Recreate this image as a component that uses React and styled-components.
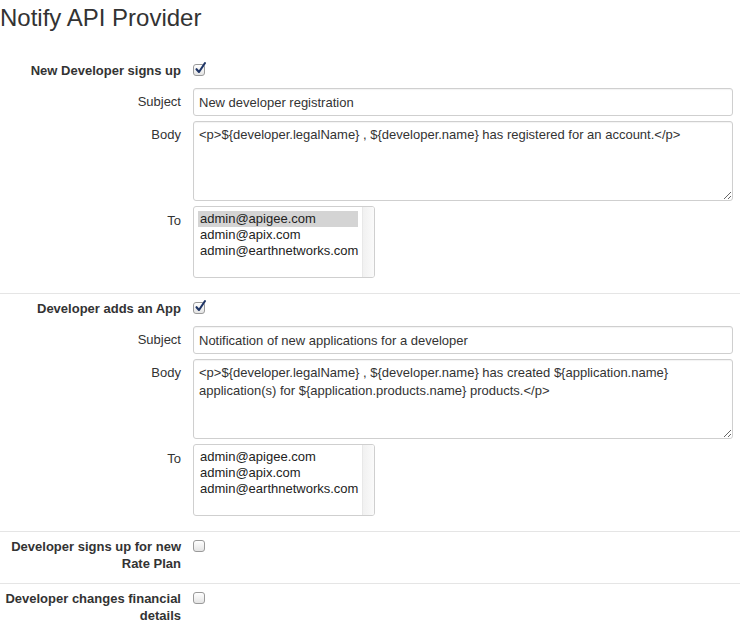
import React from 'react';
import styled, { createGlobalStyle } from 'styled-components';

const GlobalStyle = createGlobalStyle`
  body {
    margin: 0;
    background: #fff;
    font-family: "Liberation Sans", Arial, sans-serif;
    font-size: 13px;
    color: #333;
  }
`;

const Page = styled.div`
  width: 740px;
  height: 630px;
  overflow: hidden;
`;

const Title = styled.h1`
  margin: 0;
  height: 55px;
  padding-top: 4px;
  box-sizing: border-box;
  font-size: 24px;
  font-weight: 300;
  line-height: 28px;
  color: #333;
`;

const Section = styled.section`
  border-top: ${p => (p.first ? 'none' : '1px solid #e5e5e5')};
  padding: ${p => p.pad || '5px 0 15px'};
  display: flex;
  flex-direction: column;
`;

const Row = styled.div`
  display: grid;
  grid-template-columns: 181px 540px;
  column-gap: 12px;
  align-items: start;
  margin-top: ${p => p.gap || 0}px;
`;

const EventLabel = styled.label`
  text-align: right;
  font-weight: bold;
  line-height: 17px;
  padding-top: ${p => p.top ?? 2}px;
  color: #333;
`;

const FieldLabel = styled.label`
  text-align: right;
  line-height: 18px;
  padding-top: ${p => p.top || 5}px;
  color: #333;
`;

const CheckHolder = styled.div`
  height: ${p => p.h || 20}px;
  display: flex;
  align-items: ${p => (p.h ? 'flex-start' : 'center')};
`;

const CheckBox = styled.span`
  width: 12px;
  height: 12px;
  box-sizing: border-box;
  border: 1px solid #9a9a9a;
  border-radius: 3px;
  background: linear-gradient(#ffffff, #e4e4e4);
  position: relative;
  display: inline-block;
  margin-top: ${p => p.top || 0}px;

  svg {
    position: absolute;
    left: 0px;
    top: -4px;
  }
`;

const TextInput = styled.input`
  box-sizing: border-box;
  width: 540px;
  height: 28px;
  border: 1px solid #cfcfcf;
  border-radius: 3px;
  padding: 0 5px;
  font-family: inherit;
  font-size: 13px;
  color: #333;
  box-shadow: inset 0 1px 1px rgba(0, 0, 0, 0.05);
  outline: none;
`;

const TextArea = styled.textarea`
  box-sizing: border-box;
  width: 540px;
  height: 80px;
  border: 1px solid #cfcfcf;
  border-radius: 3px;
  padding: 4px 5px;
  font-family: inherit;
  font-size: 13px;
  line-height: 18px;
  color: #333;
  box-shadow: inset 0 1px 1px rgba(0, 0, 0, 0.05);
  outline: none;
  display: block;
`;

const ListBox = styled.div`
  box-sizing: border-box;
  width: 182px;
  height: 72px;
  border: 1px solid #cfcfcf;
  border-radius: 3px;
  display: flex;
  overflow: hidden;
`;

const Options = styled.div`
  flex: 1;
  padding: 4px 4px 0 4px;
`;

const Option = styled.div`
  line-height: 16px;
  height: 16px;
  padding-left: 2px;
  color: #222;
  background: ${p => (p.selected ? '#d4d4d4' : 'transparent')};
`;

const Track = styled.div`
  width: 11px;
  border-left: 1px solid #e8e8e8;
  background: linear-gradient(90deg, #f1f1f1, #fafafa);
`;

const Check = () => (
  <svg width="13" height="14" viewBox="0 0 13 14">
    <path
      d="M2.5 8.2 L5 11 L11 2"
      fill="none"
      stroke="#1f3566"
      strokeWidth="2.1"
      strokeLinecap="round"
      strokeLinejoin="round"
    />
  </svg>
);

const emails = ['admin@apigee.com', 'admin@apix.com', 'admin@earthnetworks.com'];

const NotifyBlock = ({ first, label, subject, body, selected, bodyGap }) => (
  <Section first={first} pad={first ? '5px 0 15px' : '4px 0 15px'}>
    <Row>
      <EventLabel>{label}</EventLabel>
      <CheckHolder>
        <CheckBox>
          <Check />
        </CheckBox>
      </CheckHolder>
    </Row>
    <Row gap={8}>
      <FieldLabel>Subject</FieldLabel>
      <TextInput readOnly defaultValue={subject} />
    </Row>
    <Row gap={bodyGap}>
      <FieldLabel>Body</FieldLabel>
      <TextArea readOnly defaultValue={body} />
    </Row>
    <Row gap={5}>
      <FieldLabel top={6}>To</FieldLabel>
      <ListBox>
        <Options>
          {emails.map((e, i) => (
            <Option key={e} selected={selected && i === 0}>{e}</Option>
          ))}
        </Options>
        <Track />
      </ListBox>
    </Row>
  </Section>
);

const EmptyBlock = ({ label }) => (
  <Section pad="6px 0 11px">
    <Row>
      <EventLabel top={0}>{label}</EventLabel>
      <CheckHolder h={17}>
        <CheckBox top={2} />
      </CheckHolder>
    </Row>
  </Section>
);

export default function App() {
  return (
    <Page>
      <GlobalStyle />
      <Title>Notify API Provider</Title>
      <NotifyBlock
        first
        bodyGap={5}
        label="New Developer signs up"
        subject="New developer registration"
        body="<p>${developer.legalName} , ${developer.name} has registered for an account.</p>"
        selected
      />
      <NotifyBlock
        bodyGap={5}
        label="Developer adds an App"
        subject="Notification of new applications for a developer"
        body="<p>${developer.legalName} , ${developer.name} has created ${application.name} application(s) for ${application.products.name} products.</p>"
      />
      <EmptyBlock label="Developer signs up for new Rate Plan" />
      <EmptyBlock label="Developer changes financial details" />
    </Page>
  );
}
